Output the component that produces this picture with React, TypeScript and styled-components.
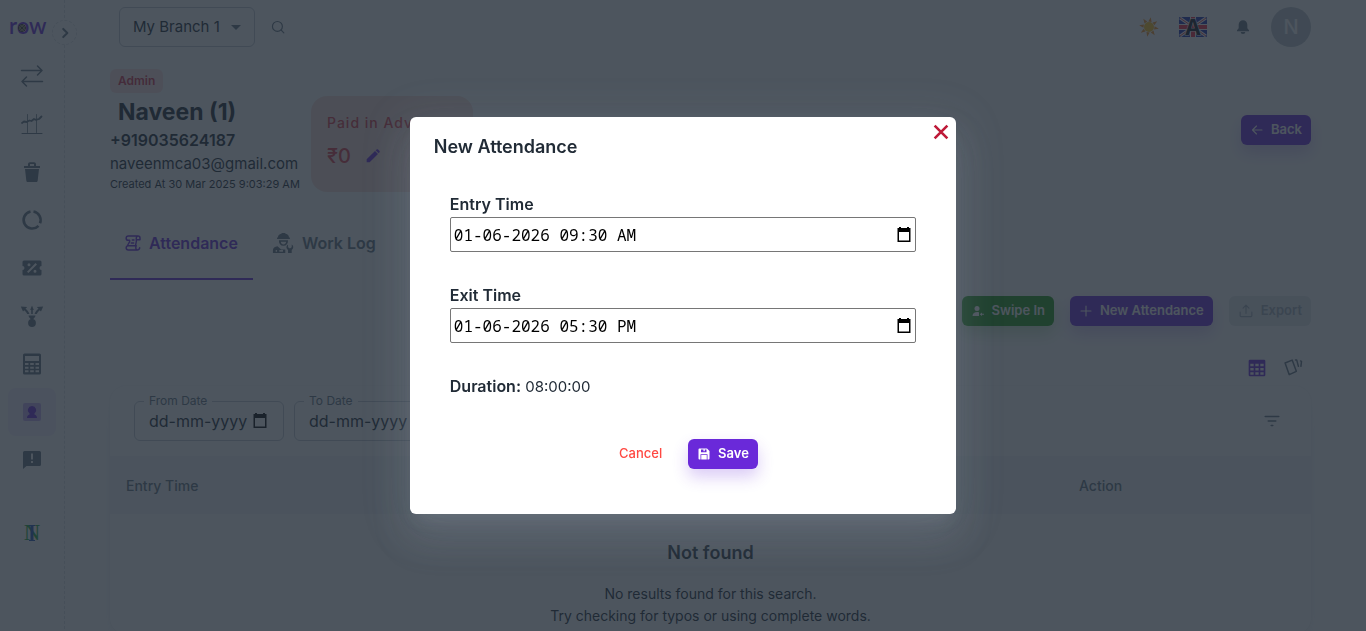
import React from "react";
import styled, { createGlobalStyle, css } from "styled-components";

const c = {
  primary: "#6a29d9",
  text: "#212b36",
  secondary: "#637381",
  error: "#ff4842",
  success: "#229a16",
  line: "#dce0e4",
  outline: "#c0c9d1",
  neutral: "#f4f6f8",
};

const GlobalStyle = createGlobalStyle`
  *, *::before, *::after { box-sizing: border-box; }
  body {
    margin: 0;
    overflow: hidden;
    background: #fff;
    color: ${c.text};
    font: 400 16px/24px Inter, "Liberation Sans", sans-serif;
  }
  button, input, select { font: inherit; color: inherit; }
  button { border: 0; background: none; padding: 0; cursor: pointer; }
  h1, h2, h3, p { margin: 0; }
  svg { display: block; flex: none; }
`;

/* ---------- icons ---------- */

type IconProps = { size?: number; children: React.ReactNode; line?: number };
const Icon = ({ size = 24, line = 0, children }: IconProps) => (
  <svg
    width={size}
    height={size}
    viewBox="0 0 24 24"
    fill={line ? "none" : "currentColor"}
    stroke={line ? "currentColor" : "none"}
    strokeWidth={line || undefined}
    strokeLinecap="round"
    strokeLinejoin="round"
    aria-hidden="true"
  >
    {children}
  </svg>
);

const SwapIcon = () => (
  <Icon line={1.5}>
    <path d="M1.500 6.500h20.500M17.500 2l4.500 4.500-4.500 4.500M22.500 17.500H2M6.500 13L2 17.500 6.500 22" />
  </Icon>
);
const ChartIcon = () => (
  <Icon line={1}>
    <path d="M2 21.500h20" />
    <path strokeWidth=".8" d="M7.500 2.500v18M16.500 2.500v18" />
    <path strokeWidth="1.800" d="M2 11l2-1.500 2.500.5 3-1.500 2 .5 2.500-2 2 .8 3-.8 2.500-2.500" />
  </Icon>
);
const TrashIcon = () => (
  <Icon>
    <path d="M8 6V4.300C8 3 8.800 2.200 10 2.200h4c1.200 0 2 .8 2 2.100V6h4v2H4V6zm2 0h4V4h-4z" />
    <path d="M5 9h14l-1.300 11.500c-.1 1-.8 1.500-1.700 1.500H8c-.9 0-1.600-.5-1.700-1.500z" />
  </Icon>
);
const RingIcon = () => (
  <Icon line={2.600}>
    <path strokeLinecap="butt" d="M13.500 3.500a8.600 8.600 0 0 1 6.500 11.700M18.500 17.800a8.600 8.600 0 1 1-8-14.300" />
  </Icon>
);
const CouponIcon = () => (
  <Icon>
    <path
      fillRule="evenodd"
      d="M4 4.500h16a1.500 1.500 0 0 1 1.500 1.500v4a2 2 0 0 0 0 4v4a1.500 1.500 0 0 1-1.500 1.500H4A1.500 1.500 0 0 1 2.500 18v-4a2 2 0 0 0 0-4V6A1.500 1.500 0 0 1 4 4.500zM15.500 7L7 15.700 8.400 17 17 8.400zM9 7.300a1.500 1.500 0 1 0 0 3 1.500 1.500 0 0 0 0-3zm6 6.400a1.500 1.500 0 1 0 0 3 1.500 1.500 0 0 0 0-3z"
    />
  </Icon>
);
const SpreadIcon = () => (
  <Icon>
    <circle cx="12" cy="19" r="3.900" />
    <path d="M8.500 11.500h7c0 1.800-1.500 2-2.300 4h-2.400c-.8-2-2.300-2.200-2.300-4zM12 1.500l1.800 4.500h-1v4h-1.600V6h-1z" />
    <path d="M.8 2.500l6.400.5-1.700 1.700c1.800 1.200 3.200 3.200 4 5.300H7.300C6.600 8.500 5.600 7.300 4.300 6.300L3 7.500zM23.200 2.500l-6.400.5 1.700 1.700c-1.800 1.200-3.200 3.200-4 5.300h2.200c.7-1.500 1.700-2.700 3-3.700L21 7.500z" />
  </Icon>
);
const CalculatorIcon = () => (
  <Icon>
    <path
      fillRule="evenodd"
      d="M4.500 1.500h15a1.500 1.500 0 0 1 1.500 1.500v18a1.500 1.500 0 0 1-1.500 1.500h-15A1.500 1.500 0 0 1 3 21V3a1.500 1.500 0 0 1 1.500-1.500zM5 4v5h14V4zM5 11v2h3.500v-2zm5.200 0v2h3.600v-2zm5.300 0v2H19v-2zM5 14.700v2h3.500v-2zm5.200 0v2h3.600v-2zm5.300 0v2H19v-2zM5 18.300v2h3.500v-2zm5.200 0v2h3.600v-2zm5.300 0v2H19v-2z"
    />
  </Icon>
);
const StaffIcon = () => (
  <Icon>
    <rect x="3" y="3" width="18" height="18" rx="2" opacity=".35" />
    <path d="M12 6a4 4 0 0 1 2.500 7.200v1.300c1.500.4 2.500 1.500 2.500 3.500H7c0-2 1-3.100 2.500-3.500v-1.300A4 4 0 0 1 12 6z" />
  </Icon>
);
const FeedbackIcon = () => (
  <Icon>
    <path fillRule="evenodd" d="M4.500 3h15A1.500 1.500 0 0 1 21 4.500v12a1.500 1.500 0 0 1-1.500 1.500H6.500L3 21V4.500A1.500 1.500 0 0 1 4.500 3zM11 5.500v6h2v-6zm0 7.500v2h2v-2z" />
  </Icon>
);
const ChevronIcon = () => (
  <Icon size={14} line={3.500}>
    <path d="M9 5l7 7-7 7" />
  </Icon>
);
const SearchIcon = () => (
  <Icon size={14} line={2}>
    <circle cx="11" cy="11" r="8.500" />
    <path d="M17.500 17.500L22 22" />
  </Icon>
);
const SunIcon = () => (
  <svg width="20" height="20" viewBox="0 0 24 24" aria-hidden="true">
    <g fill="#f59324">
      {[10, 55, 100, 145, 190, 235, 280, 325].map((a) => (
        <path key={a} d="M10 5.500L12 0l2 5.500z" transform={`rotate(${a} 12 12)`} />
      ))}
    </g>
    <circle cx="12" cy="12" r="6" fill="#fcc21b" />
  </svg>
);
const FlagIcon = () => (
  <svg width="28" height="20" viewBox="0 0 28 20" overflow="visible" aria-hidden="true">
    <rect width="28" height="20" rx="1" fill="#1c2fb0" />
    <path d="M1 1l26 18M27 1L1 19" stroke="#fff" strokeWidth="3" />
    <path d="M1 1l26 18M27 1L1 19" stroke="#e2434e" strokeWidth="1" />
    <path d="M14 0v20M0 10h28" stroke="#fff" strokeWidth="6" />
    <path d="M14 0v20M0 10h28" stroke="#f0243f" strokeWidth="4" />
    <text x="14" y="18" textAnchor="middle" fontFamily="Inter, sans-serif" fontWeight="700" fontSize="22" fill="#10181f" stroke="#fff" strokeWidth="1" paintOrder="stroke">
      A
    </text>
  </svg>
);
const BellIcon = () => (
  <Icon size={16}>
    <path d="M12 2a6.500 6.500 0 0 1 6.500 6.500V14l2.500 3v1.500H3V17l2.500-3V8.500A6.500 6.500 0 0 1 12 2zM8.500 19.500h7a3.500 3 0 0 1-7 0z" />
  </Icon>
);
const BackIcon = () => (
  <Icon size={12} line={2.200}>
    <path d="M22 12H3M11 4l-8 8 8 8" />
  </Icon>
);
const PlusIcon = () => (
  <Icon size={12} line={2.200}>
    <path d="M12 2v20M2 12h20" />
  </Icon>
);
const UploadIcon = () => (
  <Icon size={14} line={2}>
    <path d="M12 16V2M7 7l5-5 5 5M2 14v6a1.500 1.500 0 0 0 1.500 1.500h17A1.500 1.500 0 0 0 22 20v-6" />
  </Icon>
);
const SwipeIcon = () => (
  <Icon size={12}>
    <circle cx="10" cy="7" r="5" />
    <path d="M1 22c0-5 4-8 10-8l3 .5V22zM24 17.500h-4V15l-4.500 3.500L20 22v-2.500h4z" />
  </Icon>
);
const PencilIcon = () => (
  <Icon size={16}>
    <path d="M2.500 17L15 4.500l4.500 4.500L7 21.500H2.500zM16 3.500l1.500-1.300c.6-.6 1.500-.6 2.100 0l2.200 2.200c.6.6.6 1.500 0 2.100L20.500 8z" />
  </Icon>
);
const ScrollIcon = () => (
  <Icon size={16} line={2.200}>
    <path d="M5 1.500h14.500a3 3 0 0 1 3 3V7H18M5 1.500a3.200 3.200 0 0 0 0 6.500h2c1 3.500-3 5-3 8M19.500 1.500c-2 0-3 2-2.500 5.500.5 4-1 5-1 9M5 22.500h13.500M5 22.500a3.200 3.200 0 0 1 0-6.500h12c-1.500 2-1 6.500 1.500 6.500a3.500 3.500 0 0 0 3.500-3.500M11 7.500h2.500M9.500 12H13" />
  </Icon>
);
const WorkerIcon = () => (
  <Icon size={22}>
    <path d="M6.500 6c0-2.500 1.500-3.500 3.500-4L11 1h3l1 1c2 .5 3.500 1.500 3.500 4h1v1.500h-14V6zM7.500 9h10c0 4-1.800 6-5 6s-5-2-5-6zm2 1.500c.5 2 1.300 3 3 3s2.500-1 3-3z" />
    <path fillRule="evenodd" d="M1 23v-3c0-2.500 2-4 5-4.500l4 3.500h4.500v4zM4 19.500v2h1.500v-2zm4 0v2H12v-2zM17.500 13.500v3l2 1.500 2-1.500v-3c2 1 2.500 4 0 6v3.500h-4v-3.500c-2.500-2-2-5 0-6z" />
  </Icon>
);
const ClockIcon = () => (
  <Icon size={20} line={1.500}>
    <circle cx="12" cy="13" r="8" />
    <path d="M12 9v4h3" />
  </Icon>
);
const TableIcon = () => (
  <Icon size={20}>
    <path
      fillRule="evenodd"
      d="M3.500 2h17A1.500 1.500 0 0 1 22 3.500v17a1.500 1.500 0 0 1-1.500 1.500h-17A1.500 1.500 0 0 1 2 20.500v-17A1.500 1.500 0 0 1 3.500 2zM4 7v3h4V7zm6 0v3h4V7zm6 0v3h4V7zM4 12v3h4v-3zm6 0v3h4v-3zm6 0v3h4v-3zM4 17v3h4v-3zm6 0v3h4v-3zm6 0v3h4v-3z"
    />
  </Icon>
);
const CardsIcon = () => (
  <Icon size={20} line={1.800}>
    <path d="M2.500 6L11 2.500l5 13.500-8.500 4zM15 2.500h1.500l2 7.500M21 3.500l1.200.5-.7 6" />
  </Icon>
);
const FilterIcon = () => (
  <Icon size={18} line={2.200}>
    <path d="M3 6h18M7 12h10M11 18h2" />
  </Icon>
);
const SaveIcon = () => (
  <Icon size={12}>
    <path fillRule="evenodd" d="M3 1h15l5 5v15a2 2 0 0 1-2 2H3a2 2 0 0 1-2-2V3a2 2 0 0 1 2-2zM6 3v5.500h11V3h-3.500v3.500H11V3zM5 12.500V23h1.500v-9h11v9H19V12.500z" />
  </Icon>
);
const CloseIcon = () => (
  <Icon size={18} line={3.500}>
    <path strokeLinecap="butt" d="M3.500 3.500l17 17M20.500 3.500l-17 17" />
  </Icon>
);
const CalendarIcon = () => (
  <svg width="16" height="16" viewBox="0 0 16 16" fill="#000" aria-hidden="true">
    <path fillRule="evenodd" d="M3 0h2v1h6V0h2v1h1.500v14H1.500V1H3zm0 5v8.500h10V5z" />
  </svg>
);
const WheelIcon = () => (
  <svg width="10" height="10" viewBox="0 0 10 10" fill="none" aria-hidden="true">
    <circle cx="5" cy="5" r="3.500" fill="#d9c9a0" stroke="#33302a" strokeWidth="1" />
    <path d="M5 1v8M1 5h8M2 2l6 6M8 2L2 8" stroke="#33302a" strokeWidth=".8" />
  </svg>
);
const CompanyIcon = () => (
  <svg width="20" height="20" viewBox="0 0 20 20" overflow="visible" aria-hidden="true">
    <text x="10" y="17" textAnchor="middle" fontFamily="Liberation Serif, serif" fontSize="23" fill="#1fa83c">
      N
    </text>
    <path d="M7 2h6v1h-1.500v14H13v1H7v-1h1.500V3H7z" fill="#2456b8" />
  </svg>
);

/* ---------- shell ---------- */

const Shell = styled.div`
  display: flex;
  min-height: 100vh;
`;

const Sidebar = styled.aside`
  position: relative;
  flex: 0 0 65px;
  display: flex;
  flex-direction: column;
  align-items: center;
  border-right: 1px dashed ${c.line};
`;

const Brand = styled.a`
  position: relative;
  display: flex;
  align-items: center;
  height: 52px;
  width: 100%;
  padding-left: 9px;
  color: ${c.primary};
  font: 600 22px/24px Lato, sans-serif;
  text-decoration: none;

  svg {
    position: absolute;
    left: 17px;
    top: 23px;
  }
`;

const Collapse = styled.button`
  position: absolute;
  top: 20px;
  right: -13px;
  z-index: 1;
  width: 25px;
  height: 25px;
  display: grid;
  place-items: center;
  border: 1px dashed ${c.line};
  border-radius: 50%;
  background: #fff;
  color: ${c.secondary};
`;

const Nav = styled.nav`
  display: flex;
  flex-direction: column;
`;

const NavLink = styled.a<{ $active?: boolean }>`
  display: grid;
  place-items: center;
  width: 48px;
  height: 48px;
  border-radius: 8px;
  color: ${(p) => (p.$active ? c.primary : c.secondary)};
  background: ${(p) => (p.$active ? "rgba(106, 41, 217, 0.08)" : "none")};
`;

const Company = styled.a`
  display: grid;
  place-items: center;
  margin-top: 37px;
  width: 24px;
  height: 24px;
`;

const Main = styled.main`
  flex: 1;
  min-width: 0;
  padding: 0 55px 0 45px;
`;

const TopBar = styled.header`
  display: flex;
  align-items: center;
  height: 54px;
  padding-left: 9px;
`;

const BranchBox = styled.div`
  position: relative;
  display: flex;
  align-items: center;
  margin-right: 16px;

  svg {
    position: absolute;
    right: 14px;
    pointer-events: none;
  }
`;

const Branch = styled.select`
  appearance: none;
  width: 136px;
  height: 40px;
  padding: 0 28px 0 13px;
  border: 1px solid ${c.outline};
  border-radius: 6px;
  background: transparent;
  font-size: 15px;
`;

const IconButton = styled.button<{ $color?: string }>`
  display: grid;
  place-items: center;
  color: ${(p) => p.$color || c.secondary};
`;

const TopActions = styled.div`
  display: flex;
  align-items: center;
  margin-left: auto;
  gap: 20px;
`;

const Alerts = styled(IconButton)`
  padding-left: 8px;
`;

const Avatar = styled.button`
  width: 40px;
  height: 40px;
  border-radius: 50%;
  background: #bcc4cb;
  color: #fff;
  font-size: 20px;
  font-weight: 500;
  line-height: 40px;
`;

/* ---------- profile ---------- */

const Profile = styled.section`
  display: flex;
  align-items: flex-start;
  padding-top: 15px;
`;

const Identity = styled.div`
  display: flex;
  flex-direction: column;
  align-items: flex-start;
  flex: 0 0 185px;
  min-width: 0;
  white-space: nowrap;
`;

const Badge = styled.span`
  padding: 0 8px;
  border-radius: 6px;
  background: rgba(255, 72, 66, 0.16);
  color: #d3304a;
  font-size: 12px;
  font-weight: 600;
`;

const Name = styled.h1`
  padding: 5px 0 3px 8px;
  font-size: 23px;
  line-height: 28px;
  font-weight: 700;
`;

const Phone = styled.p`
  line-height: 22px;
  font-weight: 600;
`;

const Email = styled.p`
  padding-top: 1px;
  font-size: 15px;
`;

const Created = styled.p`
  font-size: 11px;
  line-height: 16px;
`;

const Advance = styled.div`
  margin: 27px 0 0 16px;
  width: 162px;
  height: 96px;
  padding: 15px 16px;
  border-radius: 16px;
  background: #f8ddd8;
  color: #d93a48;
`;

const AdvanceTitle = styled.p`
  font-size: 14px;
  font-weight: 500;
  letter-spacing: 1px;
  white-space: nowrap;
`;

const Amount = styled.p`
  display: flex;
  align-items: center;
  gap: 14px;
  margin-top: 9px;
  font-size: 20px;
  font-weight: 500;
`;

type Tone = "primary" | "success" | "disabled" | "text";
const tones = {
  primary: css`
    background: ${c.primary};
    color: #fff;
    box-shadow: 0 8px 16px rgba(106, 41, 217, 0.24);
  `,
  success: css`
    background: ${c.success};
    color: #fff;
    box-shadow: 0 8px 16px rgba(34, 154, 22, 0.24);
  `,
  disabled: css`
    background: rgba(145, 158, 171, 0.24);
    color: rgba(145, 158, 171, 0.8);
  `,
  text: css`
    color: ${c.error};
    font-weight: 500;
  `,
};

const Button = styled.button<{ $tone: Tone }>`
  display: inline-flex;
  align-items: center;
  justify-content: center;
  gap: 8px;
  min-width: 64px;
  height: 30px;
  padding: 0 9px 2px 10px;
  border-radius: 6px;
  font-size: 13px;
  font-weight: 600;
  white-space: nowrap;
  ${(p) => tones[p.$tone]}

  svg {
    margin-top: 2px;
  }
`;

const BackSlot = styled.div`
  margin: 46px 0 0 auto;
`;

/* ---------- tabs & tools ---------- */

const Tabs = styled.div`
  display: flex;
  gap: 4px;
  margin-top: 16px;
`;

const Tab = styled.button<{ $active?: boolean }>`
  display: flex;
  align-items: center;
  gap: 8px;
  height: 72px;
  padding: 0 15px;
  border-bottom: 2px solid ${(p) => (p.$active ? c.primary : "transparent")};
  color: ${(p) => (p.$active ? c.primary : c.secondary)};
  font-weight: 600;
`;

const Actions = styled.div`
  display: flex;
  justify-content: flex-end;
  gap: 16px;
  padding-top: 16px;
`;

const Views = styled.div`
  display: flex;
  justify-content: flex-end;
  gap: 16px;
  padding: 32px 8px 8px 0;
`;

const Card = styled.section`
  border-radius: 16px;
  background: #fff;
  box-shadow: 0 0 2px rgba(145, 158, 171, 0.2), 0 12px 24px -4px rgba(145, 158, 171, 0.12);
`;

const Filters = styled.div`
  display: flex;
  align-items: center;
  gap: 10px;
  height: 70px;
  padding: 0 30px 0 24px;

  > button {
    margin-left: auto;
  }
`;

const DateBox = styled.fieldset`
  display: flex;
  align-items: center;
  width: 150px;
  height: 48px;
  min-width: 0;
  margin: 0 0 8px;
  padding: 0 15px 8px 14px;
  border: 1px solid ${c.outline};
  border-radius: 6px;

  legend {
    padding: 0 5px;
    margin-left: -5px;
    color: ${c.secondary};
    font-size: 12px;
    line-height: 16px;
  }
`;

const DateInput = styled.input`
  flex: 1;
  min-width: 0;
  border: 0;
  padding: 0;
  outline: 0;
  background: none;

  &::placeholder {
    color: ${c.text};
    opacity: 1;
  }
`;

const Table = styled.table`
  width: 100%;
  border-collapse: collapse;

  th {
    height: 58px;
    padding: 2px 16px 0;
    background: ${c.neutral};
    color: ${c.secondary};
    font-size: 14px;
    font-weight: 500;
    text-align: left;
  }
  th:last-child {
    width: 248px;
  }
  td {
    height: 120px;
    padding: 18px 16px 0;
    text-align: center;
    font-size: 14px;
    line-height: 22px;
  }
`;

const EmptyTitle = styled.h3`
  margin-bottom: 16px;
  font-size: 18px;
  line-height: 28px;
  font-weight: 600;
`;

/* ---------- dialog ---------- */

const Backdrop = styled.div`
  position: fixed;
  inset: 0;
  z-index: 10;
  display: grid;
  place-items: center;
  background: rgba(33, 43, 54, 0.8);
`;

const Dialog = styled.div`
  position: relative;
  width: 40%;
  padding: 18px 24px 44px;
  border-radius: 6px;
  background: #fff;
  box-shadow: 0 11px 15px -7px rgba(145, 158, 171, 0.2), 0 24px 38px 3px rgba(145, 158, 171, 0.14),
    0 9px 46px 8px rgba(145, 158, 171, 0.12);
`;

const Close = styled.button`
  position: absolute;
  top: 6px;
  right: 6px;
  color: #be1a38;
`;

const DialogTitle = styled.h2`
  font-size: 18px;
  line-height: 24px;
  font-weight: 600;
`;

const Form = styled.form`
  display: flex;
  flex-direction: column;
  gap: 32px;
  padding: 34px 16px 0;
`;

const Field = styled.div`
  display: flex;
  flex-direction: column;

  label {
    padding-bottom: 2px;
    line-height: 22px;
    font-weight: 600;
  }
`;

const TimeBox = styled.div`
  display: flex;
  align-items: center;
  height: 35px;
  padding: 0 3px;
  border: 1px solid #767676;
  border-radius: 2px;
`;

const TimeInput = styled.input`
  flex: 1;
  min-width: 0;
  border: 0;
  padding: 0;
  outline: 0;
  color: #000;
  font: 16px/24px "Noto Sans Mono", "DejaVu Sans Mono", monospace;
`;

const Duration = styled.p`
  height: 24px;
  font-size: 15px;
  line-height: 22px;

  strong {
    font-size: 16px;
    font-weight: 600;
  }
`;

const FormActions = styled.div`
  display: flex;
  justify-content: center;
  gap: 16px;
  padding: 8px 0 1px;
`;

const nav = [
  ["Transactions", SwapIcon],
  ["Analytics", ChartIcon],
  ["Waste", TrashIcon],
  ["Usage", RingIcon],
  ["Coupons", CouponIcon],
  ["Distribution", SpreadIcon],
  ["Accounting", CalculatorIcon],
  ["Staff", StaffIcon],
  ["Feedback", FeedbackIcon],
] as const;

const TimeField = ({ id, label, value }: { id: string; label: string; value: string }) => (
  <Field>
    <label htmlFor={id}>{label}</label>
    <TimeBox>
      <TimeInput id={id} defaultValue={value} />
      <IconButton type="button" aria-label={`Pick ${label}`}>
        <CalendarIcon />
      </IconButton>
    </TimeBox>
  </Field>
);

const DateField = ({ label }: { label: string }) => (
  <DateBox>
    <legend>{label}</legend>
    <DateInput aria-label={label} placeholder="dd-mm-yyyy" />
    <IconButton type="button" aria-label={`Pick ${label}`}>
      <CalendarIcon />
    </IconButton>
  </DateBox>
);

export default function App() {
  return (
    <>
      <GlobalStyle />
      <Shell>
        <Sidebar>
          <Brand href="#">
            row
            <WheelIcon />
          </Brand>
          <Collapse aria-label="Expand menu">
            <ChevronIcon />
          </Collapse>
          <Nav>
            {nav.map(([label, Glyph]) => (
              <NavLink key={label} href="#" aria-label={label} $active={label === "Staff"}>
                <Glyph />
              </NavLink>
            ))}
          </Nav>
          <Company href="#" aria-label="Company">
            <CompanyIcon />
          </Company>
        </Sidebar>

        <Main>
          <TopBar>
            <BranchBox>
              <Branch aria-label="Branch">
                <option>My Branch 1</option>
              </Branch>
              <svg width="10" height="5" viewBox="0 0 10 5" fill={c.secondary} aria-hidden="true">
                <path d="M0 0h10L5 5z" />
              </svg>
            </BranchBox>
            <IconButton aria-label="Search">
              <SearchIcon />
            </IconButton>
            <TopActions>
              <IconButton aria-label="Light mode">
                <SunIcon />
              </IconButton>
              <IconButton aria-label="Language">
                <FlagIcon />
              </IconButton>
              <Alerts aria-label="Notifications">
                <BellIcon />
              </Alerts>
              <Avatar>N</Avatar>
            </TopActions>
          </TopBar>

          <Profile>
            <Identity>
              <Badge>Admin</Badge>
              <Name>Naveen (1)</Name>
              <Phone>+919035624187</Phone>
              <Email>naveenmca03@gmail.com</Email>
              <Created>Created At 30 Mar 2025 9:03:29 AM</Created>
            </Identity>
            <Advance>
              <AdvanceTitle>Paid in Advance</AdvanceTitle>
              <Amount>
                ₹0
                <IconButton aria-label="Edit advance" $color={c.primary}>
                  <PencilIcon />
                </IconButton>
              </Amount>
            </Advance>
            <BackSlot>
              <Button $tone="primary">
                <BackIcon />
                Back
              </Button>
            </BackSlot>
          </Profile>

          <Tabs role="tablist">
            <Tab role="tab" aria-selected="true" $active>
              <ScrollIcon />
              Attendance
            </Tab>
            <Tab role="tab" aria-selected="false">
              <WorkerIcon />
              Work Log
            </Tab>
            <Tab role="tab" aria-selected="false" aria-label="History">
              <ClockIcon />
            </Tab>
          </Tabs>

          <Actions>
            <Button $tone="success">
              <SwipeIcon />
              Swipe In
            </Button>
            <Button $tone="primary">
              <PlusIcon />
              New Attendance
            </Button>
            <Button $tone="disabled" disabled>
              <UploadIcon />
              Export
            </Button>
          </Actions>

          <Views>
            <IconButton aria-label="Table view" $color={c.primary}>
              <TableIcon />
            </IconButton>
            <IconButton aria-label="Card view">
              <CardsIcon />
            </IconButton>
          </Views>

          <Card>
            <Filters>
              <DateField label="From Date" />
              <DateField label="To Date" />
              <IconButton aria-label="Filter">
                <FilterIcon />
              </IconButton>
            </Filters>
            <Table>
              <thead>
                <tr>
                  <th>Entry Time</th>
                  <th>Action</th>
                </tr>
              </thead>
              <tbody>
                <tr>
                  <td colSpan={2}>
                    <EmptyTitle>Not found</EmptyTitle>
                    <p>No results found for this search.</p>
                    <p>Try checking for typos or using complete words.</p>
                  </td>
                </tr>
              </tbody>
            </Table>
          </Card>
        </Main>
      </Shell>

      <Backdrop>
        <Dialog role="dialog" aria-modal="true" aria-labelledby="dialog-title">
          <Close aria-label="Close">
            <CloseIcon />
          </Close>
          <DialogTitle id="dialog-title">New Attendance</DialogTitle>
          <Form onSubmit={(e) => e.preventDefault()}>
            <TimeField id="entry" label="Entry Time" value="01-06-2026 09:30 AM" />
            <TimeField id="exit" label="Exit Time" value="01-06-2026 05:30 PM" />
            <Duration>
              <strong>Duration:</strong> 08:00:00
            </Duration>
            <FormActions>
              <Button type="button" $tone="text">
                Cancel
              </Button>
              <Button type="submit" $tone="primary">
                <SaveIcon />
                Save
              </Button>
            </FormActions>
          </Form>
        </Dialog>
      </Backdrop>
    </>
  );
}
